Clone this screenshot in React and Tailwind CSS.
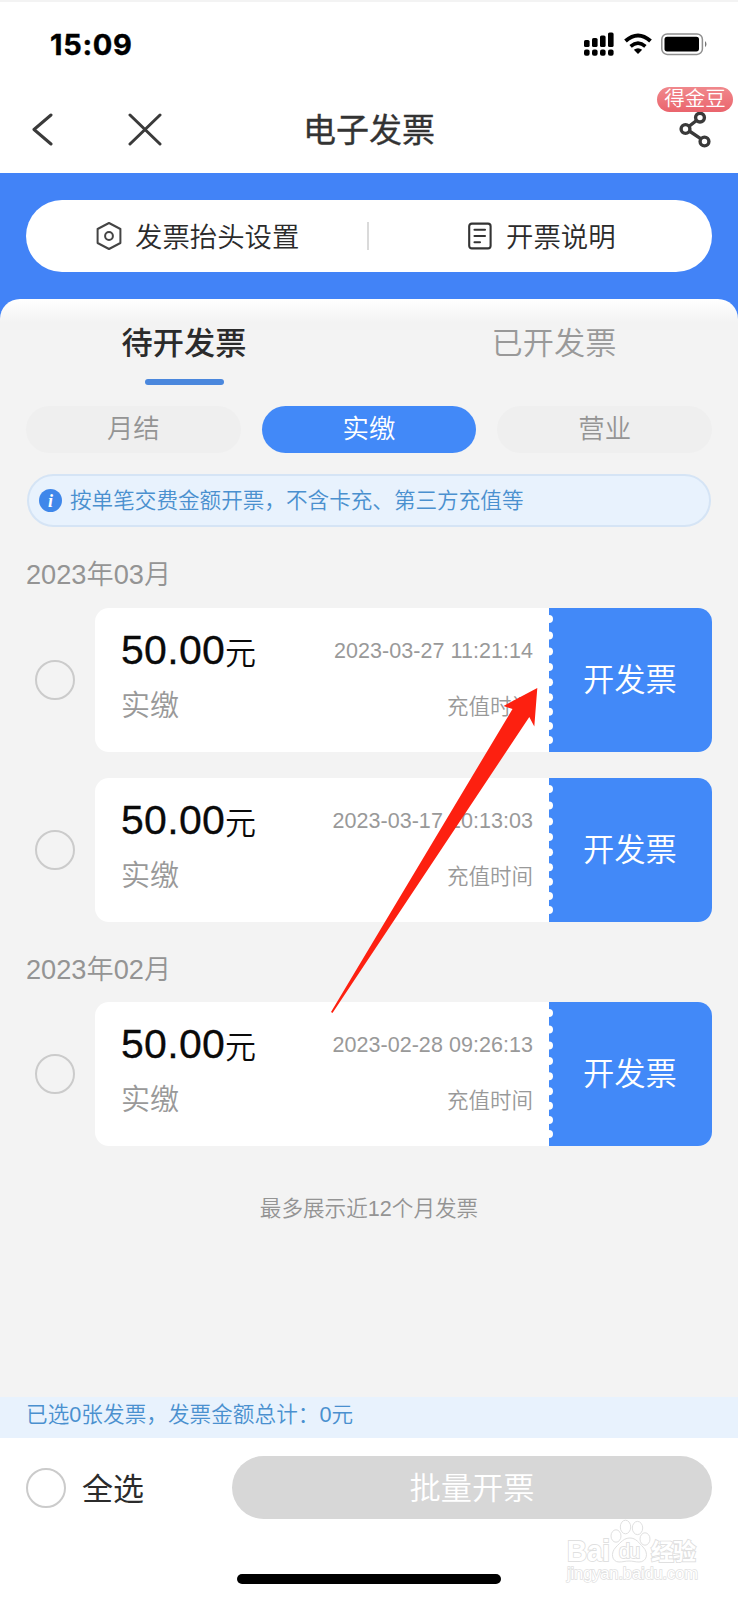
const FONT = "font-['Liberation_Sans','Noto_Sans_CJK_SC',sans-serif]";

const NOTCHES = [11, 27.5, 43.5, 59, 74.3, 89.2, 103.7, 118, 132];

function StatusBar() {
  return (
    <div className="flex h-[84px] items-start justify-between border-t-2 border-[#f3f3f3] pl-[50px] pr-[30px] pt-[27px]">
      <span className="font-['Inter',sans-serif] text-[29px] font-bold leading-[32px] tracking-[0.7px] text-black [-webkit-text-stroke:0.4px_#000]">15:09</span>
      <svg className="mt-[2px]" width="126" height="26" viewBox="582 31 126 26">
        <g fill="#000">
          <rect x="584" y="40" width="5.6" height="7" rx="1.6" />
          <rect x="592" y="38" width="5.6" height="9" rx="1.6" />
          <rect x="600" y="35.5" width="5.6" height="11.5" rx="1.6" />
          <rect x="608" y="32.5" width="5.6" height="14.5" rx="1.6" />
          <rect x="584" y="49.6" width="5.6" height="6.2" rx="2" />
          <rect x="592" y="49.6" width="5.6" height="6.2" rx="2" />
          <rect x="600" y="49.6" width="5.6" height="6.2" rx="2" />
          <rect x="608" y="49.6" width="5.6" height="6.2" rx="2" />
          <path d="M638 54 L633.8 49.8 Q638 46.6 642.2 49.8 Z" />
          <rect x="664.5" y="36.8" width="34.5" height="14.6" rx="2.6" />
        </g>
        <path d="M625.5 41 Q638 30 650.5 41" fill="none" stroke="#000" strokeWidth="4" />
        <path d="M630.6 46.4 Q638 40 645.4 46.4" fill="none" stroke="#000" strokeWidth="3.6" />
        <rect x="661.8" y="34" width="40.6" height="20.4" rx="5.4" fill="none" stroke="#8f8f8f" strokeWidth="1.5" />
        <path d="M705 41 q3 3.2 0 6.2z" fill="#777" />
      </svg>
    </div>
  );
}

function NavBar() {
  return (
    <div className="relative flex h-[89px] items-center justify-center">
      <svg className="absolute left-[30px] top-[28px]" width="134" height="34" viewBox="0 0 134 34" fill="none" stroke="#3a3a3a" strokeWidth="3" strokeLinecap="round" strokeLinejoin="round">
        <path d="M21 3 L4 17.5 L21 32" />
        <path d="M100 3 L130 32 M130 3 L100 32" />
      </svg>
      <h1 className="pt-[4px] text-[33px] leading-none text-[#333] [-webkit-text-stroke:0.35px_#333]">电子发票</h1>
      <svg className="absolute left-[678px] top-[27px]" width="34" height="38" viewBox="678 111 34 38" fill="none" stroke="#3a3a3a" strokeWidth="3.4">
        <path d="M688.8 126.5 L696.5 120.5 M689.3 131 L701 138.8" />
        <circle cx="685.5" cy="129" r="4.4" />
        <circle cx="700" cy="117.6" r="4.4" />
        <circle cx="704.5" cy="141.5" r="4.4" />
      </svg>
      <span className="absolute left-[657px] top-[3px] flex h-[25px] w-[76px] items-center justify-center rounded-full bg-gradient-to-b from-[#f0888c] to-[#ea646d] text-[20.5px] font-[350] leading-none text-white">得金豆</span>
    </div>
  );
}

function QuickLinks() {
  return (
    <div className="flex h-[72px] items-center rounded-full bg-white text-[27.4px] font-[350] leading-none text-[#2b2b2b]">
      <div className="flex w-[341px] items-center pl-[69px]">
        <svg className="mr-[12px]" width="28" height="30" viewBox="0 0 28 30" fill="none" stroke="#444" strokeWidth="2">
          <path d="M14 2 L25.4 8 V22 L14 28 L2.6 22 V8 Z" strokeLinejoin="round" />
          <circle cx="14" cy="15" r="3.9" />
        </svg>
        <span className="pt-[3px]">发票抬头设置</span>
      </div>
      <div className="h-[28px] w-[2px] bg-[#dadada]" />
      <div className="flex flex-1 items-center pl-[98px]">
        <svg className="mr-[13px]" width="26" height="30" viewBox="0 0 26 30" fill="none" stroke="#333" strokeWidth="2.1" strokeLinecap="round">
          <rect x="2.2" y="2.6" width="21.4" height="24.8" rx="2.6" />
          <path d="M7.5 8.8 H18 M7.5 15 H18 M7.5 21.2 H13" />
        </svg>
        <span className="pt-[3px]">开票说明</span>
      </div>
    </div>
  );
}

function Ticket({ time }) {
  return (
    <div className="flex h-[144px] items-center">
      <span className="ml-[9px] mr-[20px] size-[40px] shrink-0 rounded-full border-2 border-[#cbcbcb]" />
      <div className="flex h-full flex-1 overflow-hidden rounded-[14px] bg-white">
        <div className="flex w-[454px] justify-between pl-[26px] pr-[16px]">
          <div className="flex flex-col">
            <div className="mt-[19px] flex h-[46px] items-baseline text-[#0a0a0a]">
              <span className="text-[41px] leading-[46px] tracking-[0.3px] [-webkit-text-stroke:0.3px_#0a0a0a]">50.00</span>
              <span className="text-[31px] font-[350] leading-none">元</span>
            </div>
            <span className="mt-[18px] text-[29px] font-[350] leading-[30px] text-[#999]">实缴</span>
          </div>
          <div className="flex flex-col items-end whitespace-nowrap text-[21.5px] text-[#999]">
            <span className="mt-[31px] leading-[25px] tracking-[0.05px]">{time}</span>
            <span className="mt-[31px] font-[350] leading-[24px] text-[#999]">充值时间</span>
          </div>
        </div>
        <div className="flex flex-1 items-center bg-[#4289f8]">
          <svg className="shrink-0" width="8" height="144" viewBox="0 0 8 144" fill="#fff">
            {NOTCHES.map((y) => (
              <circle key={y} cx="0" cy={y} r="4" />
            ))}
          </svg>
          <span className="ml-[26px] pt-[2px] text-[31.3px] font-[350] leading-none text-white">开发票</span>
        </div>
      </div>
    </div>
  );
}

function Watermark() {
  const outline = { paintOrder: "stroke" };
  return (
    <svg className="absolute left-[560px] top-[1514px]" width="150" height="76" viewBox="560 1514 150 76" fill="#fff" stroke="#e0e0e0" strokeWidth="1.8">
      <g strokeWidth="1">
        <ellipse cx="616" cy="1536" rx="5" ry="6.2" />
        <ellipse cx="625.5" cy="1527" rx="5.2" ry="6.8" />
        <ellipse cx="637.5" cy="1528" rx="5.2" ry="6.6" />
        <ellipse cx="645" cy="1539" rx="5" ry="6.2" />
        <path d="M630 1538 c6 0 9 5 13 9 c6 6 4 15 -4 15 c-4 0 -6 -1 -10 -1 c-4 0 -6 1 -10 1 c-7 0 -9 -9 -3 -15 c5 -5 8 -9 14 -9z" />
      </g>
      <text x="567" y="1561" fontSize="29" fontWeight="bold" textLength="43" lengthAdjust="spacingAndGlyphs" style={outline}>Bai</text>
      <text x="619" y="1558" fontSize="20" textLength="21" style={outline}>du</text>
      <text x="651" y="1560" fontSize="23" fontWeight="bold" textLength="45" style={outline}>经验</text>
      <text x="567" y="1579" fontSize="16.5" textLength="131" strokeWidth="1.4" style={outline}>jingyan.baidu.com</text>
    </svg>
  );
}

export default function App() {
  return (
    <div className={`relative flex h-[1600px] w-[738px] flex-col overflow-hidden bg-white ${FONT}`}>
      <StatusBar />
      <NavBar />
      <div className="h-[146px] shrink-0 bg-[#4283f7] px-[26px] pt-[27px]">
        <QuickLinks />
      </div>

      <main className="-mt-[20px] flex h-[1098px] shrink-0 flex-col rounded-t-[20px] bg-[#f3f3f3] bg-[linear-gradient(to_bottom,#ffffff_0px,#f3f3f3_24px)] px-[26px]">
        <div className="flex h-[86px] text-[31.2px] leading-none">
          <div className="flex flex-1 flex-col items-center justify-between pr-[27px]">
            <span className="mt-[29px] font-medium text-[#2b2b2b]">待开发票</span>
            <span className="h-[6px] w-[79px] rounded-[3px] bg-[#4a87dd]" />
          </div>
          <div className="flex flex-1 flex-col items-center pl-[27px]">
            <span className="mt-[29px] font-[350] text-[#999]">已开发票</span>
          </div>
        </div>

        <div className="mt-[21px] grid h-[47px] grid-cols-3 gap-[21px] text-[26.4px] font-[350] leading-[46px] text-[#949494]">
          <span className="rounded-full bg-[#efefef] text-center">月结</span>
          <span className="rounded-full bg-[#4289f8] text-center text-white">实缴</span>
          <span className="rounded-full bg-[#efefef] text-center">营业</span>
        </div>

        <div className="mx-[1px] mt-[21px] flex h-[53px] items-center rounded-full border-2 border-[#d5e4f5] bg-[#e8f2fd] pl-[10px] text-[21.6px] font-[350] leading-none text-[#4a90cf]">
          <span className="mr-[8px] flex size-[23px] items-center justify-center rounded-full bg-[#3f87ea] font-['Liberation_Serif',serif] text-[18px] font-bold italic text-white">i</span>
          <span>按单笔交费金额开票，不含卡充、第三方充值等</span>
        </div>

        <h2 className="mt-[33px] text-[27.2px] font-[350] leading-[30px] text-[#949494]">2023年03月</h2>
        <div className="mt-[18px] flex flex-col gap-[26px]">
          <Ticket time="2023-03-27 11:21:14" />
          <Ticket time="2023-03-17 10:13:03" />
        </div>
        <h2 className="mt-[33px] text-[27.2px] font-[350] leading-[30px] text-[#949494]">2023年02月</h2>
        <div className="mt-[17px]">
          <Ticket time="2023-02-28 09:26:13" />
        </div>
        <p className="mt-[51px] text-center text-[21.6px] font-[350] leading-[24px] text-[#949494]">最多展示近12个月发票</p>
      </main>

      <div className="flex h-[41px] shrink-0 items-center bg-[#e8f2fd] pb-[5px] pl-[26px] text-[21.6px] font-[350] leading-none tracking-[0.05px] text-[#4a90cf]">
        已选0张发票，发票金额总计：0元
      </div>
      <footer className="flex items-center px-[26px] pt-[18px]">
        <span className="size-[40px] rounded-full border-2 border-[#cbcbcb]" />
        <span className="ml-[16px] pt-[3px] text-[31px] leading-none text-[#2b2b2b]">全选</span>
        <button className="ml-auto h-[63px] w-[480px] rounded-full bg-[#d7d7d7] pt-[3px] text-[31.2px] font-[350] leading-none text-white">批量开票</button>
      </footer>
      <div className="mt-[55px] h-[10px] w-[264px] self-center rounded-full bg-black" />

      <Watermark />
      <svg className="pointer-events-none absolute left-[325px] top-[680px]" width="220" height="340" viewBox="325 680 220 340">
        <path d="M537.3 688 L503.5 706 L512.5 709 L331 1012 L332.5 1013 L529.3 717 L534.3 726.5 Z" fill="#fd2010" />
      </svg>
    </div>
  );
}
